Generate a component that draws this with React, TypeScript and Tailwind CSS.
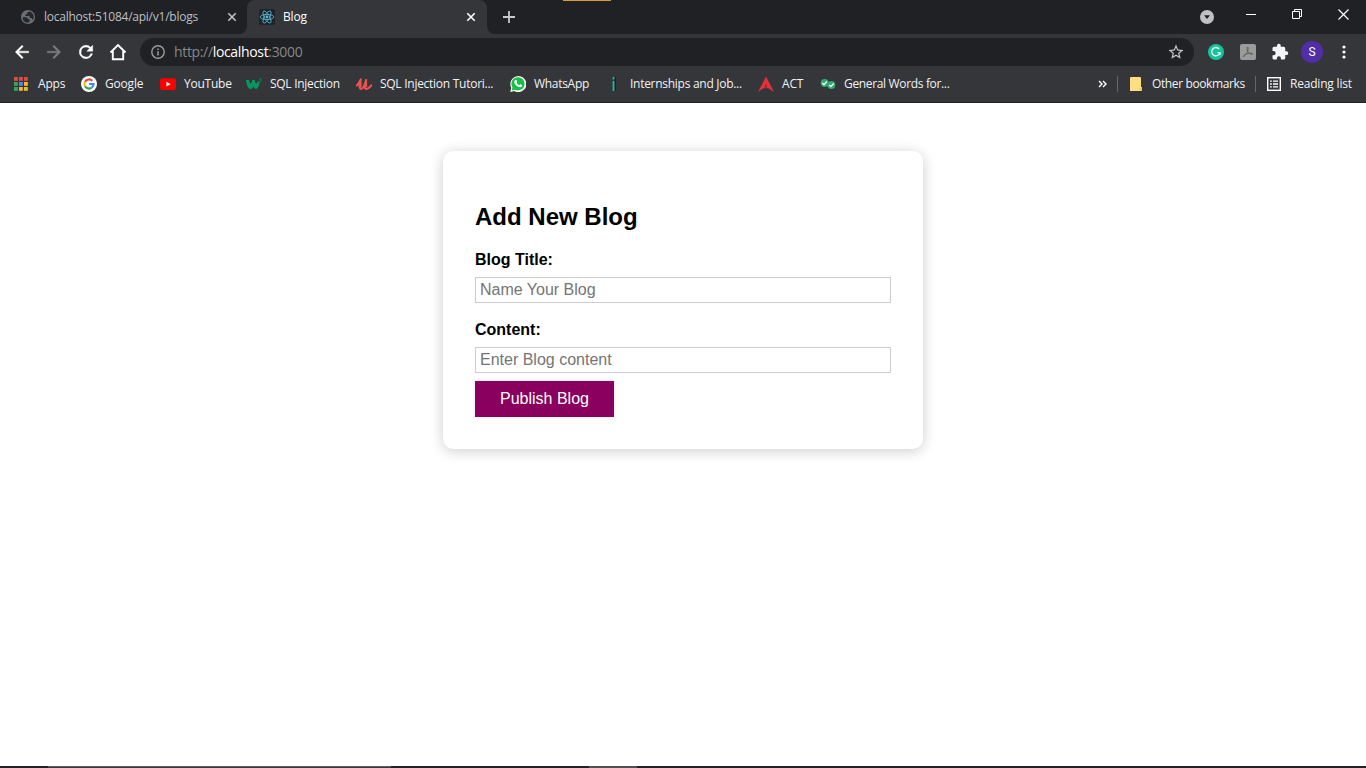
import React from "react";

const ui = "font-['Open_Sans','Noto_Sans',sans-serif]";

function Label({ children, className = "" }: { children: React.ReactNode; className?: string }) {
  return <span className={`block shrink-0 text-[12px] leading-4 whitespace-nowrap ${className}`}>{children}</span>;
}

function Globe() {
  return (
    <svg viewBox="0 0 24 24" className="size-4 shrink-0">
      <circle cx="12" cy="12" r="10.6" fill="#6c6f73" />
      <path d="M4 12.500h5c2.500 0 3 1.500 3 3h2.500v3.500l-3 1.500C7 20.500 3.500 17 4 12.500zM13.500 3.800l-3 1.700v2.500H8v2.500h6.500v3h3l1 2.500 1.700-1C22 9 18.500 4.500 13.500 3.800z" fill="#26282b" />
    </svg>
  );
}

function ReactLogo() {
  return (
    <svg viewBox="0 0 16 16" className="size-4 shrink-0">
      <rect width="16" height="16" rx="1.500" fill="#202327" />
      <g fill="none" stroke="#55bdd8" strokeWidth=".8">
        <ellipse cx="8" cy="8" rx="6.800" ry="2.600" />
        <ellipse cx="8" cy="8" rx="6.800" ry="2.600" transform="rotate(60 8 8)" />
        <ellipse cx="8" cy="8" rx="6.800" ry="2.600" transform="rotate(120 8 8)" />
      </g>
      <circle cx="8" cy="8" r="1.400" fill="#55bdd8" />
    </svg>
  );
}

function TabClose({ color }: { color: string }) {
  return (
    <svg viewBox="0 0 10 10" className="size-[10px] shrink-0">
      <path d="M1.300 1.300l7.400 7.400M8.700 1.300L1.300 8.700" stroke={color} strokeWidth="1.600" />
    </svg>
  );
}

function TabStrip() {
  return (
    <div className="flex h-[34px] bg-[#202124]">
      <div className="flex h-[34px] w-[247px] items-center pl-5 text-[#bcbfc3]">
        <Globe />
        <Label className="ml-2 w-[154px] tracking-[-0.24px]">localhost:51084/api/v1/blogs</Label>
        <div className="ml-[29px]"><TabClose color="#c2c4c8" /></div>
      </div>
      <div className="relative flex h-[34px] w-[240px] items-center rounded-t-lg bg-[#35363a] pl-3 text-white">
        <svg className="absolute bottom-0 -left-2 size-2" viewBox="0 0 8 8"><path d="M8 0v8H0a8 8 0 0 0 8-8z" fill="#35363a" /></svg>
        <svg className="absolute bottom-0 -right-2 size-2" viewBox="0 0 8 8"><path d="M0 0v8h8a8 8 0 0 1-8-8z" fill="#35363a" /></svg>
        <ReactLogo />
        <Label className="ml-2 w-6 tracking-[-0.2px]">Blog</Label>
        <div className="ml-[159px]"><TabClose color="#ffffff" /></div>
      </div>
      <div className="flex w-[76px] items-center pl-4">
        <svg viewBox="0 0 12 12" className="size-3"><path d="M6 0v12M0 6h12" stroke="#c6c8cb" strokeWidth="1.800" /></svg>
      </div>
      <div className="h-px w-12 bg-[#d99a3a]" />
      <div className="flex flex-1 justify-end pr-[17px]">
        <svg viewBox="0 0 14 14" className="mt-[10px] mr-8 size-[14px]">
          <circle cx="7" cy="7" r="7" fill="#bfc1c4" />
          <path d="M4 5.200h6L7 9z" fill="#202124" />
        </svg>
        <svg viewBox="0 0 10 10" className="mt-[9px] mr-[36px] size-[10px]"><path d="M0 5.500h10" stroke="#fff" /></svg>
        <svg viewBox="0 0 10 10" className="mt-[9px] mr-[36px] size-[10px]" fill="none" stroke="#fff">
          <path d="M.5 2.500h7v7h-7zM2.500 2.500v-2h7v7h-2" />
        </svg>
        <svg viewBox="0 0 11 11" className="mt-[9px] size-[11px]"><path d="M.5.500l10 10M10.500.500l-10 10" stroke="#fff" strokeWidth="1.200" /></svg>
      </div>
    </div>
  );
}

function Toolbar() {
  return (
    <div className="flex h-[36px] items-center bg-[#35363a] pl-3">
      <svg viewBox="0 0 24 24" className="mr-3 size-5" fill="#fff"><path d="M20 11H7.830l5.590-5.590L12 4l-8 8 8 8 1.410-1.410L7.830 13H20z" stroke="#fff" strokeWidth=".5" /></svg>
      <svg viewBox="0 0 24 24" className="mr-3 size-5" fill="#7d7f82"><path d="M4 11h12.170l-5.590-5.590L12 4l8 8-8 8-1.410-1.410L16.170 13H4z" stroke="#7d7f82" strokeWidth=".5" /></svg>
      <svg viewBox="0 0 24 24" className="mr-3 size-5" fill="#fff"><path d="M17.650 6.350A7.960 7.960 0 0 0 12 4a8 8 0 1 0 7.730 10h-2.080A6 6 0 1 1 12 6c1.660 0 3.140.69 4.220 1.780L13 11h7V4z" stroke="#fff" strokeWidth=".6" /></svg>
      <svg viewBox="0 0 20 20" className="size-5" fill="none"><path d="M2.500 10.500L10 3l7.500 7.500M4.800 9v8.200h10.400V9" stroke="#fff" strokeWidth="1.900" /></svg>
      <div className="ml-3 flex h-7 w-[1054px] items-center rounded-full bg-[#202124] pl-[11px] text-[#85888c]">
        <svg viewBox="0 0 14 14" className="size-[14px]" fill="none">
          <circle cx="7" cy="7" r="6.200" stroke="#9a9da1" strokeWidth="1.400" />
          <path d="M7 6.200v4.200M7 3.400v1.600" stroke="#9a9da1" strokeWidth="1.500" />
        </svg>
        <span className="ml-[9px] block w-[129px] text-[14px] leading-5 tracking-[-0.34px] whitespace-nowrap">
          http://<span className="text-white">localhost</span>:3000
        </span>
        <svg viewBox="0 0 24 24" className="ml-[864px] size-[18px]" fill="#c6c8cb"><path d="M22 9.240l-7.190-.62L12 2 9.190 8.630 2 9.240l5.460 4.730L5.820 21 12 17.270 18.180 21l-1.630-7.030L22 9.240zM12 15.400l-3.760 2.270 1-4.280-3.320-2.880 4.380-.38L12 6.100l1.710 4.040 4.380.38-3.320 2.880 1 4.280L12 15.400z" /></svg>
      </div>
      <svg viewBox="0 0 16 16" className="ml-[14px] size-4" fill="none">
        <circle cx="8" cy="8" r="8" fill="#15c39a" />
        <path d="M11.300 5.200A4.200 4.200 0 1 0 12 8.700H9.300M12 8.200v2.800" stroke="#e9fff8" strokeWidth="1.300" />
      </svg>
      <svg viewBox="0 0 16 16" className="ml-4 size-4" fill="none">
        <rect width="16" height="16" rx="2" fill="#9b9b9c" />
        <path d="M7.500 3c1.300 0 .7 3.300-.4 5.300C6 10.500 4.200 12.800 3.400 12.500c-1-.7 2.800-2.800 5.400-3.200 2-.3 4 0 3.900.7-.3 1-3.200-.2-4.400-1.800C7.200 6.800 6.600 3 7.500 3z" stroke="#58595b" strokeWidth=".9" />
      </svg>
      <svg viewBox="0 0 24 24" className="ml-[15px] size-[18px]" fill="#f4f5f7"><path d="M20.500 11H19V7a2 2 0 0 0-2-2h-4V3.500a2.500 2.500 0 0 0-5 0V5H4a2 2 0 0 0-1.990 2v3.800H3.500a2.700 2.700 0 0 1 0 5.400H2V20a2 2 0 0 0 2 2h3.800v-1.500a2.700 2.700 0 0 1 5.400 0V22H17a2 2 0 0 0 2-2v-4h1.500a2.500 2.500 0 0 0 0-5z" /></svg>
      <div className="ml-3 flex size-[22px] items-center justify-center rounded-full bg-[#512da8] font-['Roboto',sans-serif] text-[12px] leading-none text-white">S</div>
      <svg viewBox="0 0 4 14" className="ml-[19px] h-[14px] w-1" fill="#fff"><circle cx="2" cy="2" r="1.600" /><circle cx="2" cy="7" r="1.600" /><circle cx="2" cy="12" r="1.600" /></svg>
    </div>
  );
}

const appColors = ["#e04a42", "#e04a42", "#e04a42", "#3aa757", "#4a8af4", "#f2b92c", "#3aa757", "#f2b92c", "#f2b92c"];

function Bookmark({ label, text, children }: { label: string; text: string; children: React.ReactNode }) {
  return (
    <div className="mr-4 flex shrink-0 items-center gap-2">
      <svg viewBox="0 0 16 16" className="size-4">{children}</svg>
      <Label className={text}>{label}</Label>
    </div>
  );
}

function BookmarksBar() {
  return (
    <div className="flex h-[33px] items-center border-b border-[#222326] bg-[#35363a] pb-1 pl-[14px] text-[#f1f2f4]">
      <div className="mr-4 flex shrink-0 items-center gap-[10px]">
        <svg viewBox="0 0 14 14" className="size-[14px]">
          {appColors.map((c, i) => (
            <rect key={i} x={(i % 3) * 5} y={Math.floor(i / 3) * 5} width="3.800" height="3.800" fill={c} />
          ))}
        </svg>
        <Label className="w-[27px] tracking-[-0.2px]">Apps</Label>
      </div>
      <Bookmark label="Google" text="w-[39px] tracking-[-0.2px]">
        <circle cx="8" cy="8" r="8" fill="#fff" />
        <g fill="none" strokeWidth="2.200">
          <path d="M11.300 4.800A4.500 4.500 0 0 0 4 6" stroke="#ea4335" />
          <path d="M4 6a4.500 4.500 0 0 0 0 4.200" stroke="#fbbc05" />
          <path d="M4 10.200a4.500 4.500 0 0 0 6.800 1.300" stroke="#34a853" />
          <path d="M10.800 11.500A4.500 4.500 0 0 0 12.500 8H8" stroke="#4285f4" />
        </g>
      </Bookmark>
      <Bookmark label="YouTube" text="w-[46px] tracking-[-0.24px]">
        <rect y="2.300" width="16" height="11.700" rx="2.800" fill="#f00" />
        <path d="M6.400 5.700v4.900l4.200-2.450z" fill="#fff" />
      </Bookmark>
      <Bookmark label="SQL Injection" text="w-[70px] tracking-[-0.28px]">
        <path d="M0 4h3.200c.2 2 .8 3.600 1.500 3.600S6 5.700 6.300 4h2.500c.2 2 .7 3.600 1.400 3.600S11.400 6.500 11.600 5.500h2c-.4 4-1.700 7.500-3.500 7.500-1.200 0-2-1.300-2.600-2.800C6.800 11.800 5.800 13 4.600 13 2 13 .4 8.500 0 4z" fill="#059862" />
        <path d="M13.500 3h1.800l-1 1.200c1.200 0 1.200 1.700-.8 1.500" fill="none" stroke="#059862" strokeWidth=".8" />
      </Bookmark>
      <Bookmark label="SQL Injection Tutori..." text="w-[114px] tracking-[-0.27px]">
        <path d="M.8 9.500C2.500 8 3.800 5.500 4.800 3.500 3.500 7 2.800 12.500 5 12.800c2 .2 4-4.500 5.200-8.800-1 4-2.500 8.800-.3 9 2 .1 3.600-1.500 5.400-3.600" fill="none" stroke="#ec5252" strokeWidth="2.200" strokeLinecap="round" strokeLinejoin="round" />
        <path d="M4.300 6v5M9.800 6v5" stroke="#ec5252" strokeWidth="2.600" />
      </Bookmark>
      <Bookmark label="WhatsApp" text="w-14 tracking-[-0.3px]">
        <path d="M.2 16l1.100-4.100A8 8 0 1 1 4.300 15z" fill="#fff" />
        <path d="M1.700 14.500l.8-3A6.600 6.600 0 1 1 5 13.700z" fill="#16bf45" />
        <path d="M5.200 4.100c.6-.6 1.200-.4 1.400.2l.5 1.200c.1.500-.6 1-.6 1.200.7 1.300 1.600 2 2.800 2.500.4 0 .8-1 1.200-.9l1.500.8c.6.600-.4 2.200-1.900 2.200C7.700 11.200 3.600 7.800 4.300 5.500z" fill="#fff" />
      </Bookmark>
      <Bookmark label="Internships and Job..." text="w-[112px] tracking-[-0.28px]">
        <path d="M8.500 1h1.500v14H8.500z" fill="#17242a" />
        <path d="M7.500 5v10" stroke="#1eb99b" strokeWidth="1.800" />
        <path d="M7.500 1v2.500" stroke="#1eb99b" strokeWidth="1.800" />
      </Bookmark>
      <Bookmark label="ACT" text="w-[22px] tracking-[-0.2px]">
        <path d="M8 .5L16 16l-5-3.500L8 11l-3 1.500L0 16z" fill="#e4313a" />
        <path d="M5 12.500L8 11l3 1.500-3-.5z" fill="#e4313a" />
        <path d="M8 7.500l1.100 3.700H6.900z" fill="#7e2930" />
      </Bookmark>
      <Bookmark label="General Words for..." text="w-[106px] tracking-[-0.34px]">
        <circle cx="4.700" cy="7" r="4" fill="#32a874" />
        <circle cx="11.300" cy="9" r="4" fill="#32a874" />
        <path d="M2.300 7l1.700 1.700 3-3.300M9.200 9l1.600 1.600 3-3.200" fill="none" stroke="#e9fff4" strokeWidth="1.400" />
      </Bookmark>
      <svg viewBox="0 0 9 8" className="ml-[132px] h-2 w-[9px] shrink-0" fill="none"><path d="M1 1l3 3-3 3M5 1l3 3-3 3" stroke="#fff" strokeWidth="1.400" /></svg>
      <div className="ml-[10px] h-4 w-px shrink-0 bg-[#65676a]" />
      <svg viewBox="0 0 12 14" className="ml-3 h-[14px] w-3 shrink-0"><path d="M0 1q0-1 1-1h9q1 0 1 1v9h1v3q0 1-1 1H0z" fill="#fddf82" /><path d="M9.500 14v-3.500H12V13q0 1-1 1z" fill="#f3cc57" /></svg>
      <Label className="ml-[10px] w-[93px] tracking-[-0.38px]">Other bookmarks</Label>
      <div className="ml-[10px] h-4 w-px shrink-0 bg-[#65676a]" />
      <svg viewBox="0 0 14 14" className="ml-[11px] size-[14px] shrink-0" fill="none" stroke="#fff">
        <rect x=".7" y=".7" width="12.600" height="12.600" strokeWidth="1.400" />
        <path d="M3 4.200h1.800M3 7h1.800M3 9.800h1.800M6 4.200h5M6 7h5M6 9.800h5" strokeWidth="1.300" />
      </svg>
      <Label className="ml-[9px] w-[62px] tracking-[-0.2px]">Reading list</Label>
    </div>
  );
}

function BlogForm() {
  const input = "mt-2 block h-[26px] w-full border border-[#ccc] bg-white px-1 text-base leading-6 placeholder:text-[#757575] placeholder:opacity-100 outline-none";
  return (
    <form className="h-[298px] w-[480px] rounded-[10px] bg-white p-8 font-['Liberation_Sans',Arial,sans-serif] text-black shadow-[0_2px_14px_rgba(0,0,0,0.2)]">
      <h2 className="mt-5 text-2xl leading-7 font-bold">Add New Blog</h2>
      <label className="mt-5 block text-base leading-[18px] font-bold">Blog Title:
        <input className={`${input} font-normal`} placeholder="Name Your Blog" />
      </label>
      <label className="mt-[18px] block text-base leading-[18px] font-bold">Content:
        <input className={`${input} font-normal`} placeholder="Enter Blog content" />
      </label>
      <button type="button" className="mt-2 block h-9 w-[139px] bg-[#8a005e] text-base leading-9 text-white shadow-[0_0_4px_rgba(0,0,0,0.12)]">Publish Blog</button>
    </form>
  );
}

export default function App() {
  return (
    <div className="flex h-screen flex-col overflow-hidden bg-white">
      <header className={ui}>
        <TabStrip />
        <Toolbar />
        <BookmarksBar />
      </header>
      <main className="flex flex-1 items-start justify-center pt-12">
        <BlogForm />
      </main>
      <footer className="flex h-[2px] bg-[#222326]">
        <div className="ml-12 h-[2px] w-[343px] border-t border-[#5c5d60] bg-[#3a3b3e]" />
        <div className="ml-[198px] h-[2px] w-12 bg-[#505154]" />
      </footer>
    </div>
  );
}
